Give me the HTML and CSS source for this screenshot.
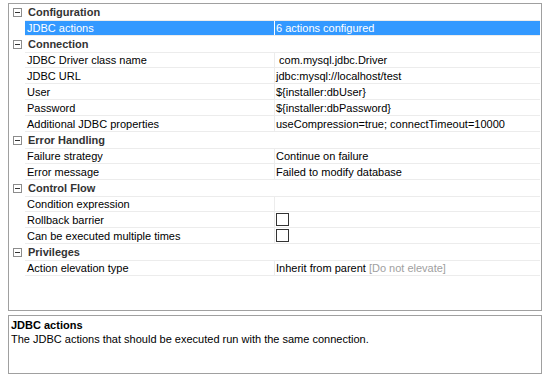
FILE: index.html
```html
<!DOCTYPE html>
<html lang="en">
<head>
    <meta charset="UTF-8">
    <title>JDBC action properties</title>
    <link rel="stylesheet" href="styles.css">
</head>
<body>
    <!-- Property sheet -->
    <div class="sheet">
        <div class="group"><svg class="toggle" width="9" height="9" viewBox="0 0 9 9"><rect x="0.5" y="0.5" width="8" height="8" fill="#fff" stroke="#8c8c8c"/><line x1="2" y1="4.5" x2="7" y2="4.5" stroke="#333"/></svg><span>Configuration</span></div>
        <div class="prop selected"><div class="name">JDBC actions</div><div class="value">6 actions configured</div></div>

        <div class="group"><svg class="toggle" width="9" height="9" viewBox="0 0 9 9"><rect x="0.5" y="0.5" width="8" height="8" fill="#fff" stroke="#8c8c8c"/><line x1="2" y1="4.5" x2="7" y2="4.5" stroke="#333"/></svg><span>Connection</span></div>
        <div class="prop"><div class="name">JDBC Driver class name</div><div class="value">&nbsp;com.mysql.jdbc.Driver</div></div>
        <div class="prop"><div class="name">JDBC URL</div><div class="value">jdbc:mysql://localhost/test</div></div>
        <div class="prop"><div class="name">User</div><div class="value">${installer:dbUser}</div></div>
        <div class="prop"><div class="name">Password</div><div class="value">${installer:dbPassword}</div></div>
        <div class="prop"><div class="name">Additional JDBC properties</div><div class="value">useCompression=true; connectTimeout=10000</div></div>

        <div class="group"><svg class="toggle" width="9" height="9" viewBox="0 0 9 9"><rect x="0.5" y="0.5" width="8" height="8" fill="#fff" stroke="#8c8c8c"/><line x1="2" y1="4.5" x2="7" y2="4.5" stroke="#333"/></svg><span>Error Handling</span></div>
        <div class="prop"><div class="name">Failure strategy</div><div class="value">Continue on failure</div></div>
        <div class="prop"><div class="name">Error message</div><div class="value">Failed to modify database</div></div>

        <div class="group"><svg class="toggle" width="9" height="9" viewBox="0 0 9 9"><rect x="0.5" y="0.5" width="8" height="8" fill="#fff" stroke="#8c8c8c"/><line x1="2" y1="4.5" x2="7" y2="4.5" stroke="#333"/></svg><span>Control Flow</span></div>
        <div class="prop"><div class="name">Condition expression</div><div class="value"></div></div>
        <div class="prop"><div class="name">Rollback barrier</div><div class="value"><span class="check"></span></div></div>
        <div class="prop"><div class="name">Can be executed multiple times</div><div class="value"><span class="check"></span></div></div>

        <div class="group"><svg class="toggle" width="9" height="9" viewBox="0 0 9 9"><rect x="0.5" y="0.5" width="8" height="8" fill="#fff" stroke="#8c8c8c"/><line x1="2" y1="4.5" x2="7" y2="4.5" stroke="#333"/></svg><span>Privileges</span></div>
        <div class="prop"><div class="name">Action elevation type</div><div class="value">Inherit from parent <span class="hint">[Do not elevate]</span></div></div>
    </div>

    <!-- Description -->
    <div class="help">
        <div class="help-title">JDBC actions</div>
        <div>The JDBC actions that should be executed run with the same connection.</div>
    </div>
</body>
</html>
```

FILE: styles.css
```css
body {
    margin: 0;
    padding: 3px 4px 0 8px;
    background: white;
    font-family: 'Liberation Sans', Arial, sans-serif;
    font-size: 11px;
    color: black;
}

/* Property sheet */
.sheet {
    height: 306px;
    border: 1px solid #a0a0a0;
    padding-right: 1px;
}

.group,
.prop {
    display: flex;
    align-items: center;
    height: 16px;
    box-sizing: border-box;
    white-space: nowrap;
}

.group {
    font-weight: bold;
    color: #333;
}

.group span {
    margin-left: 6px;
}

.group .toggle {
    margin-left: 4px;
}

.prop {
    margin-left: 16px;
    border-bottom: 1px solid #ececec;
}

.group + .prop {
    border-top: 1px solid #ececec;
}

.prop .name {
    width: 247px;
    padding-left: 2px;
}

.prop .value {
    flex: 1;
    height: 100%;
    display: flex;
    align-items: center;
    padding-left: 1px;
    border-left: 1px solid #ececec;
}

.prop.selected {
    background: #3399ff;
    color: white;
}

.prop.selected .value {
    border-left-color: white;
}

.check {
    display: inline-block;
    width: 11px;
    height: 11px;
    border: 1px solid #333;
    background: white;
}

.hint {
    color: #a0a0a0;
    margin-left: 3px;
}

/* Description */
.help {
    margin-top: 4px;
    height: 57px;
    border: 1px solid #a0a0a0;
    padding: 0 2px;
    line-height: 14px;
}

.help-title {
    font-weight: bold;
    margin-top: 2px;
}
```
